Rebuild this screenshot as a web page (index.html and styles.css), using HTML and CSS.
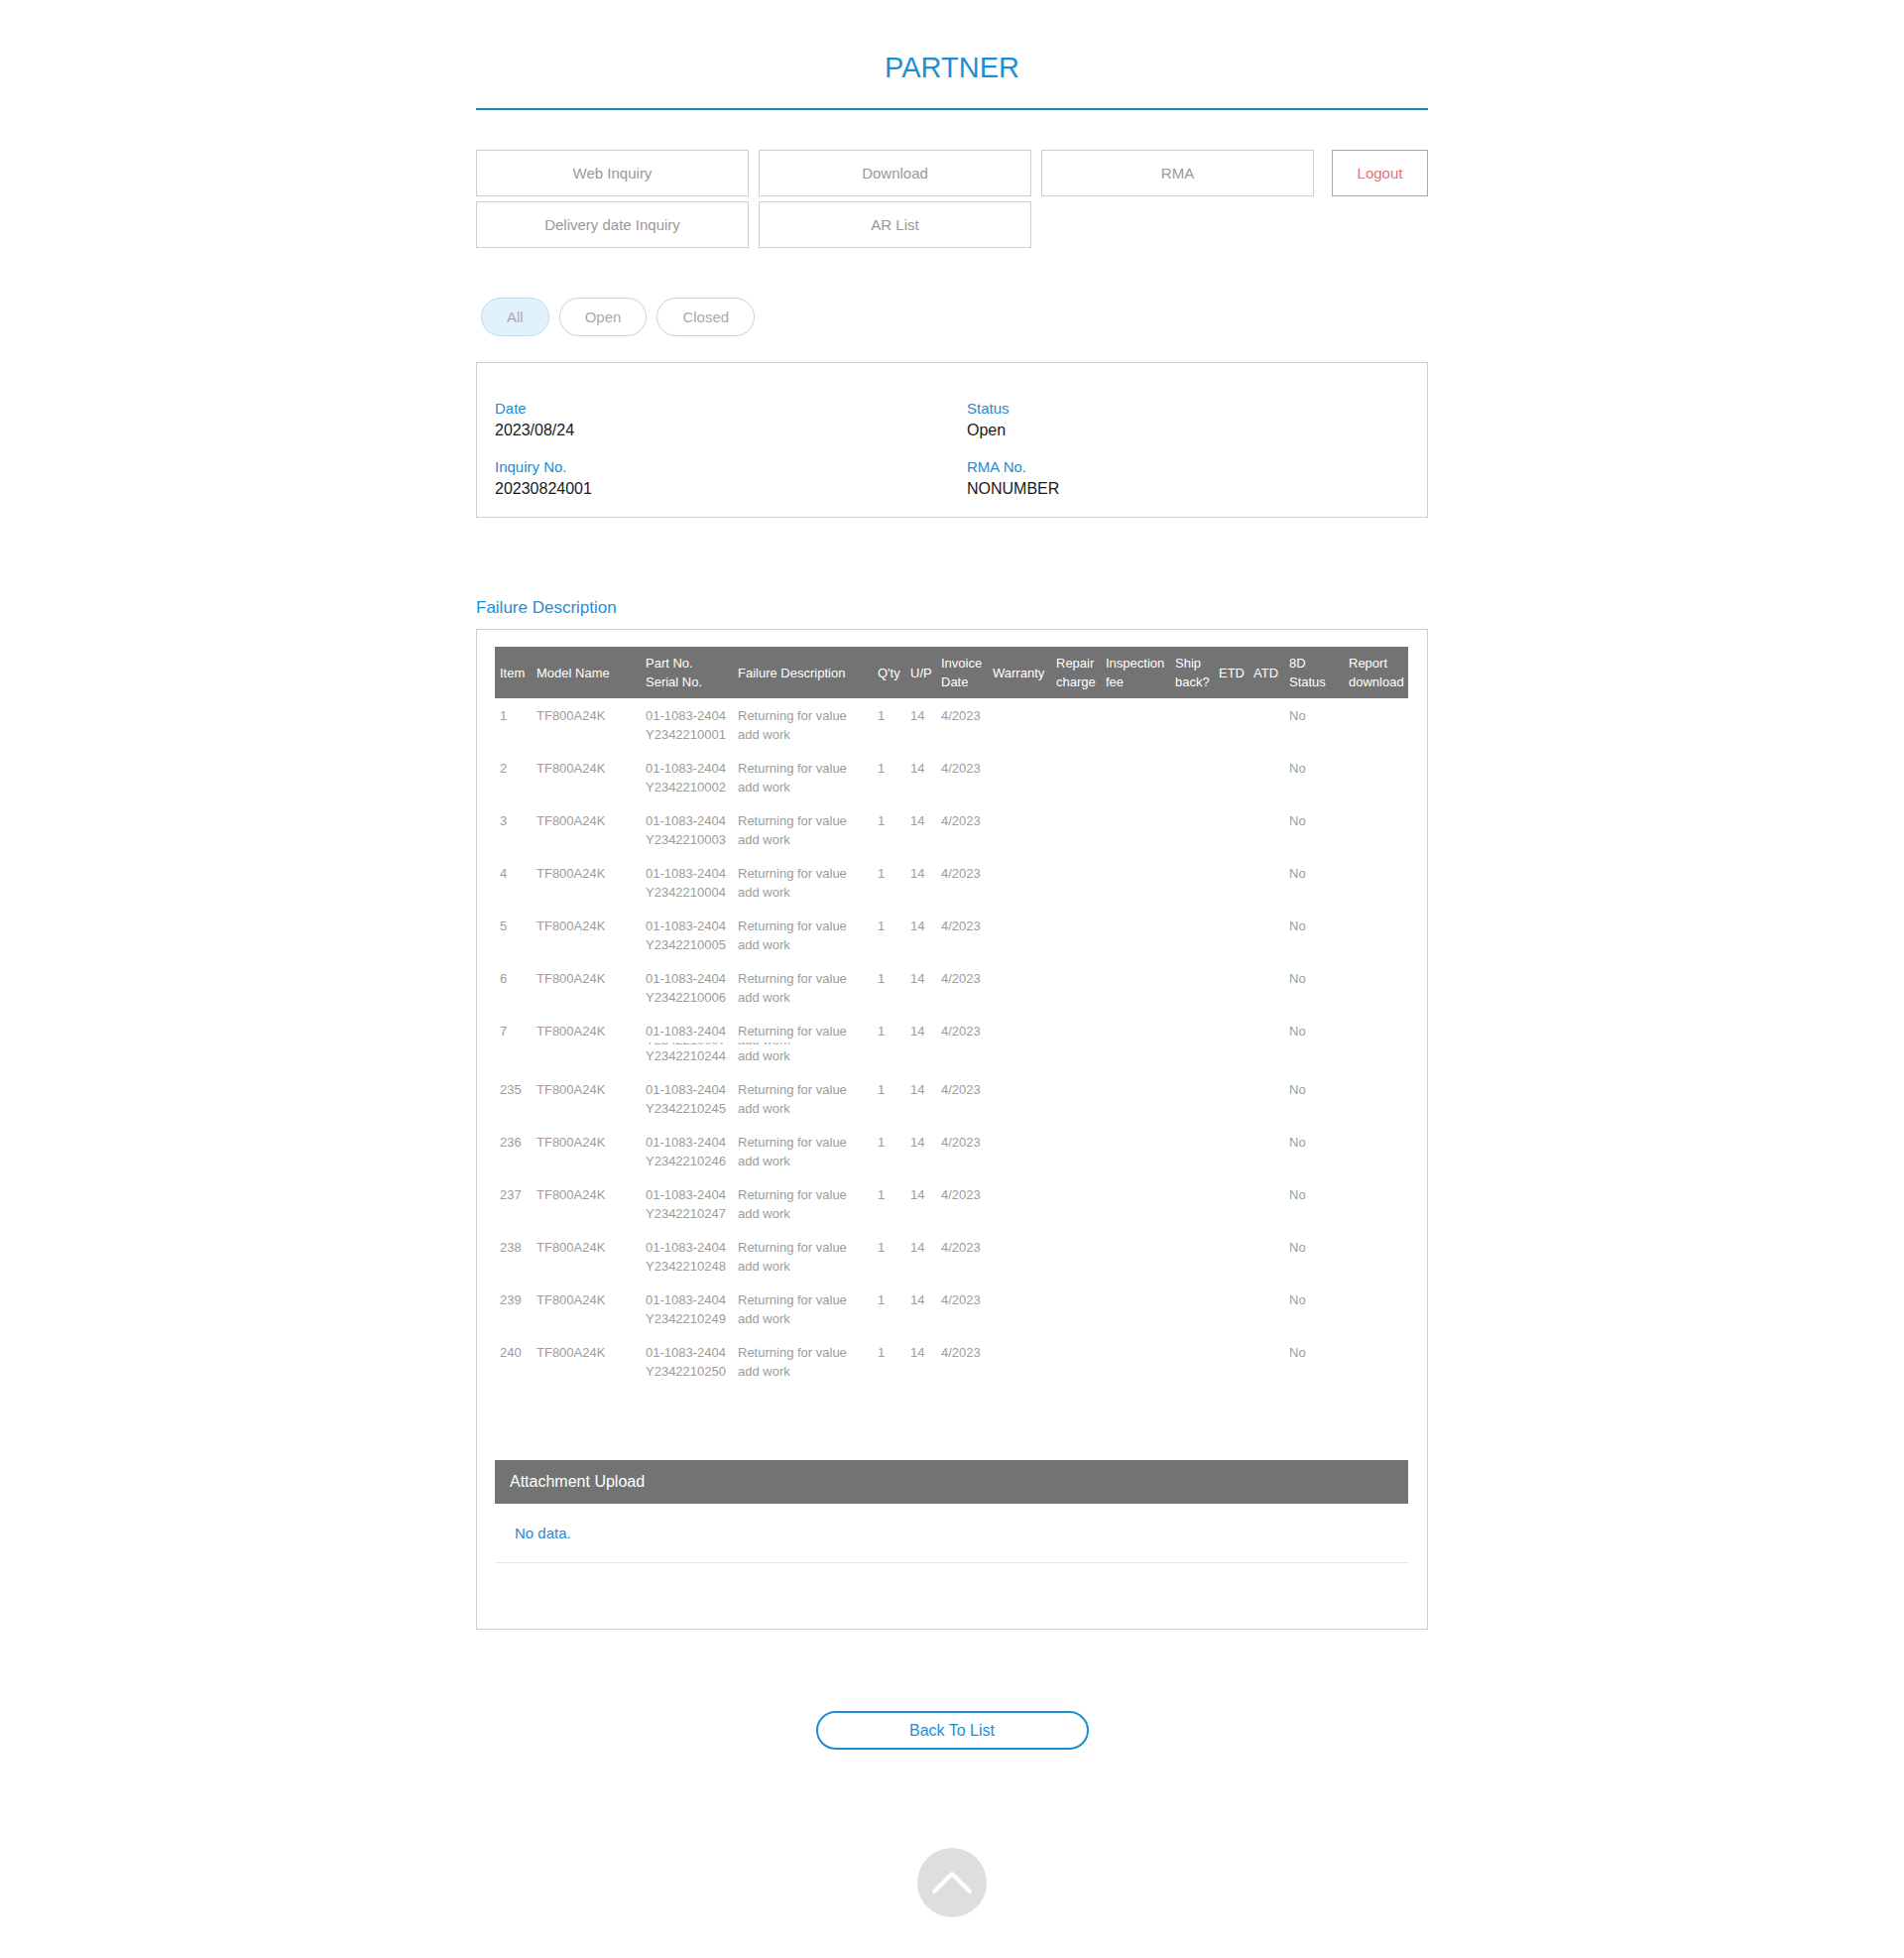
FILE: index.html
```html
<!DOCTYPE html>
<html lang="en">
<head>
<meta charset="utf-8">
<title>PARTNER - RMA Detail</title>
<link rel="stylesheet" href="styles.css">
</head>
<body>
<div class="page">
  <header class="site-header">
    <h1 class="brand">PARTNER</h1>
  </header>

  <nav class="main-nav">
    <div class="nav-grid">
      <a class="nav-btn" href="#">Web Inquiry</a>
      <a class="nav-btn" href="#">Download</a>
      <a class="nav-btn" href="#">RMA</a>
      <a class="nav-btn" href="#">Delivery date Inquiry</a>
      <a class="nav-btn" href="#">AR List</a>
    </div>
    <a class="nav-btn logout" href="#">Logout</a>
  </nav>

  <div class="filters">
    <button class="pill active">All</button>
    <button class="pill">Open</button>
    <button class="pill">Closed</button>
  </div>

  <section class="summary">
    <div class="field">
      <div class="field-label">Date</div>
      <div class="field-value">2023/08/24</div>
    </div>
    <div class="field">
      <div class="field-label">Status</div>
      <div class="field-value">Open</div>
    </div>
    <div class="field">
      <div class="field-label">Inquiry No.</div>
      <div class="field-value">20230824001</div>
    </div>
    <div class="field">
      <div class="field-label">RMA No.</div>
      <div class="field-value">NONUMBER</div>
    </div>
  </section>

  <h2 class="section-title">Failure Description</h2>

  <section class="detail-box">
    <table class="items">
      <colgroup>
        <col style="width:37px"><col style="width:110px"><col style="width:93px"><col style="width:141px">
        <col style="width:33px"><col style="width:31px"><col style="width:52px"><col style="width:64px">
        <col style="width:50px"><col style="width:70px"><col style="width:44px"><col style="width:35px">
        <col style="width:36px"><col style="width:60px"><col style="width:65px">
      </colgroup>
      <thead>
        <tr>
          <th>Item</th><th>Model Name</th><th>Part No.<br>Serial No.</th><th>Failure Description</th>
          <th>Q'ty</th><th>U/P</th><th>Invoice<br>Date</th><th>Warranty</th><th>Repair<br>charge</th>
          <th>Inspection<br>fee</th><th>Ship<br>back?</th><th>ETD</th><th>ATD</th><th>8D<br>Status</th><th>Report<br>download</th>
        </tr>
      </thead>
      <tbody>
        <tr><td>1</td><td>TF800A24K</td><td>01-1083-2404<br>Y2342210001</td><td>Returning for value<br>add work</td><td>1</td><td>14</td><td>4/2023</td><td></td><td></td><td></td><td></td><td></td><td></td><td>No</td><td></td></tr>
        <tr><td>2</td><td>TF800A24K</td><td>01-1083-2404<br>Y2342210002</td><td>Returning for value<br>add work</td><td>1</td><td>14</td><td>4/2023</td><td></td><td></td><td></td><td></td><td></td><td></td><td>No</td><td></td></tr>
        <tr><td>3</td><td>TF800A24K</td><td>01-1083-2404<br>Y2342210003</td><td>Returning for value<br>add work</td><td>1</td><td>14</td><td>4/2023</td><td></td><td></td><td></td><td></td><td></td><td></td><td>No</td><td></td></tr>
        <tr><td>4</td><td>TF800A24K</td><td>01-1083-2404<br>Y2342210004</td><td>Returning for value<br>add work</td><td>1</td><td>14</td><td>4/2023</td><td></td><td></td><td></td><td></td><td></td><td></td><td>No</td><td></td></tr>
        <tr><td>5</td><td>TF800A24K</td><td>01-1083-2404<br>Y2342210005</td><td>Returning for value<br>add work</td><td>1</td><td>14</td><td>4/2023</td><td></td><td></td><td></td><td></td><td></td><td></td><td>No</td><td></td></tr>
        <tr><td>6</td><td>TF800A24K</td><td>01-1083-2404<br>Y2342210006</td><td>Returning for value<br>add work</td><td>1</td><td>14</td><td>4/2023</td><td></td><td></td><td></td><td></td><td></td><td></td><td>No</td><td></td></tr>
        <tr><td>7</td><td>TF800A24K</td><td>01-1083-2404<div class="clip"><span>Y2342210007</span></div>Y2342210244</td><td>Returning for value<div class="clip"><span>add work</span></div>add work</td><td>1</td><td>14</td><td>4/2023</td><td></td><td></td><td></td><td></td><td></td><td></td><td>No</td><td></td></tr>
        <tr><td>235</td><td>TF800A24K</td><td>01-1083-2404<br>Y2342210245</td><td>Returning for value<br>add work</td><td>1</td><td>14</td><td>4/2023</td><td></td><td></td><td></td><td></td><td></td><td></td><td>No</td><td></td></tr>
        <tr><td>236</td><td>TF800A24K</td><td>01-1083-2404<br>Y2342210246</td><td>Returning for value<br>add work</td><td>1</td><td>14</td><td>4/2023</td><td></td><td></td><td></td><td></td><td></td><td></td><td>No</td><td></td></tr>
        <tr><td>237</td><td>TF800A24K</td><td>01-1083-2404<br>Y2342210247</td><td>Returning for value<br>add work</td><td>1</td><td>14</td><td>4/2023</td><td></td><td></td><td></td><td></td><td></td><td></td><td>No</td><td></td></tr>
        <tr><td>238</td><td>TF800A24K</td><td>01-1083-2404<br>Y2342210248</td><td>Returning for value<br>add work</td><td>1</td><td>14</td><td>4/2023</td><td></td><td></td><td></td><td></td><td></td><td></td><td>No</td><td></td></tr>
        <tr><td>239</td><td>TF800A24K</td><td>01-1083-2404<br>Y2342210249</td><td>Returning for value<br>add work</td><td>1</td><td>14</td><td>4/2023</td><td></td><td></td><td></td><td></td><td></td><td></td><td>No</td><td></td></tr>
        <tr><td>240</td><td>TF800A24K</td><td>01-1083-2404<br>Y2342210250</td><td>Returning for value<br>add work</td><td>1</td><td>14</td><td>4/2023</td><td></td><td></td><td></td><td></td><td></td><td></td><td>No</td><td></td></tr>
      </tbody>
    </table>

    <div class="attach">
      <div class="attach-head">Attachment Upload</div>
      <div class="attach-empty">No data.</div>
    </div>
  </section>

  <div class="actions">
    <a class="back-btn" href="#">Back To List</a>
  </div>

  <div class="to-top-wrap">
    <a class="to-top" href="#" aria-label="Back to top">
      <svg width="70" height="70" viewBox="0 0 70 70">
        <polyline points="17,44 35,26 53,44" fill="none" stroke="#fff" stroke-width="4" stroke-linecap="round" stroke-linejoin="round"/>
      </svg>
    </a>
  </div>
</div>
</body>
</html>
```

FILE: styles.css
```css
* {
  box-sizing: border-box;
}

html, body {
  margin: 0;
  padding: 0;
  background: #fff;
}

body {
  font-family: "Liberation Sans", Arial, sans-serif;
  color: #222;
}

a {
  text-decoration: none;
}

.page {
  width: 960px;
  margin: 0 auto;
  padding-bottom: 41px;
}

/* header */
.site-header {
  padding-top: 51px;
  padding-bottom: 24px;
  border-bottom: 2px solid #1f8bb5;
}

.brand {
  margin: 0;
  font-size: 29px;
  line-height: 34px;
  font-weight: normal;
  text-align: center;
  color: #1b8fd6;
}

/* navigation buttons */
.main-nav {
  margin-top: 40px;
  display: flex;
  align-items: flex-start;
}

.nav-grid {
  display: grid;
  grid-template-columns: repeat(3, 275px);
  gap: 5px 10px;
}

.nav-btn {
  display: flex;
  align-items: center;
  justify-content: center;
  height: 47px;
  border: 1px solid #cfcfcf;
  color: #999;
  font-size: 15px;
  background: #fff;
}

.nav-btn.logout {
  margin-left: auto;
  width: 97px;
  border-color: #e39090;
  color: #e57373;
}

/* status filters */
.filters {
  margin-top: 50px;
  padding-left: 5px;
  display: flex;
  gap: 10px;
}

.pill {
  height: 39px;
  padding: 0 25px;
  border: 1px solid #cfcfcf;
  border-radius: 20px;
  background: #fff;
  color: #aaa;
  font-family: inherit;
  font-size: 15px;
  cursor: pointer;
}

.pill.active {
  background: #e2f2fd;
  border-color: #c4d9e6;
}

/* summary */
.summary {
  margin-top: 26px;
  border: 1px solid #cfcfcf;
  padding: 36px 18px 18px;
  display: grid;
  grid-template-columns: 1fr 1fr;
  gap: 17px 30px;
}

.field-label {
  font-size: 15px;
  line-height: 20px;
  color: #2a8ad0;
}

.field-value {
  margin-top: 2px;
  font-size: 16px;
  line-height: 20px;
  color: #1a1a1a;
}

.section-title {
  margin: 80px 0 10px;
  font-size: 17px;
  line-height: 22px;
  font-weight: normal;
  color: #1b8fd6;
}

/* detail box */
.detail-box {
  border: 1px solid #cfcfcf;
  padding: 17px 19px 66px 18px;
}

.items {
  width: 921px;
  table-layout: fixed;
  border-collapse: collapse;
  font-size: 13px;
  line-height: 19px;
}

.items th {
  background: #737373;
  color: #fff;
  font-weight: normal;
  text-align: left;
  vertical-align: middle;
  height: 52px;
  padding: 0 5px;
  white-space: nowrap;
}

.items td {
  color: #9c9c9c;
  vertical-align: top;
  padding: 8px 5px 7px;
  white-space: nowrap;
}

/* row whose second line is squeezed behind the next one */
.clip {
  height: 4px;
  margin-top: 2px;
  overflow: hidden;
  opacity: 0.8;
}

.clip span {
  display: block;
  margin-top: -12px;
}

/* attachments */
.attach {
  margin-top: 73px;
}

.attach-head {
  height: 44px;
  line-height: 44px;
  padding-left: 15px;
  background: #737373;
  color: #fff;
  font-size: 16px;
}

.attach-empty {
  height: 60px;
  line-height: 59px;
  padding-left: 20px;
  font-size: 15px;
  color: #2a8ad0;
  border-bottom: 1px solid #e8e8e8;
}

/* bottom actions */
.actions {
  margin-top: 82px;
  display: flex;
  justify-content: center;
}

.back-btn {
  display: flex;
  align-items: center;
  justify-content: center;
  width: 275px;
  height: 39px;
  border: 2px solid #1b8fd6;
  border-radius: 20px;
  color: #1b8fd6;
  font-size: 16px;
}

.to-top-wrap {
  margin-top: 99px;
  display: flex;
  justify-content: center;
}

.to-top {
  display: block;
  width: 70px;
  height: 70px;
  border-radius: 50%;
  background: #dedede;
}

.to-top svg {
  display: block;
}
```
